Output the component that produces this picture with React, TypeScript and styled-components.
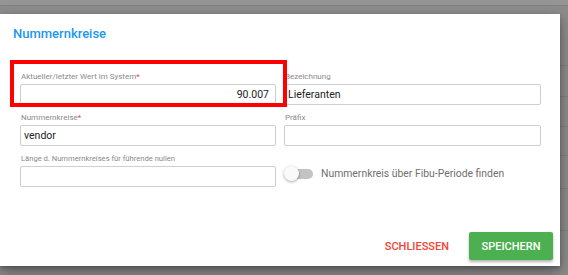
import React, { useState } from 'react';
import styled, { createGlobalStyle } from 'styled-components';

const GlobalStyle = createGlobalStyle`
  html, body {
    margin: 0;
    padding: 0;
    width: 568px;
    height: 275px;
    overflow: hidden;
    font-family: 'Roboto', 'Liberation Sans', sans-serif;
  }
`;

const Page = styled.div`
  position: relative;
  width: 568px;
  height: 275px;
  background-color: #8c8c8c;
  overflow: hidden;
`;

const BackdropRow = styled.div<{ $height: number }>`
  height: ${(p) => p.$height}px;
  border-bottom: 1px solid #808080;
  box-sizing: border-box;
`;

const Dialog = styled.div`
  position: absolute;
  top: 14px;
  left: 0;
  width: 560px;
  height: 252px;
  background-color: white;
  box-shadow: 0 6px 14px rgba(0, 0, 0, 0.35), 0 2px 4px rgba(0, 0, 0, 0.2);
  display: flex;
  flex-direction: column;
`;

const Title = styled.h2`
  margin: 0;
  padding: 12px 13px 0;
  height: 45px;
  box-sizing: border-box;
  font-size: 13px;
  font-weight: 500;
  color: #2196f3;
`;

const Form = styled.div`
  display: grid;
  grid-template-columns: 256px 257px;
  column-gap: 8px;
  row-gap: 7px;
  padding: 12px 19px 0 20px;
`;

const Field = styled.div`
  display: flex;
  flex-direction: column;
`;

const Label = styled.label<{ $size?: number }>`
  height: 12px;
  margin-bottom: 1px;
  padding-left: 1px;
  font-size: ${(p) => p.$size ?? 8}px;
  line-height: 12px;
  color: #8a8a8a;
  white-space: nowrap;
`;

const Required = styled.span`
  color: #f44336;
`;

const Input = styled.div<{ $align?: 'left' | 'right' }>`
  height: 21px;
  box-sizing: border-box;
  border: 1px solid #cfcfcf;
  border-radius: 2px;
  padding: 0 ${(p) => (p.$align === 'right' ? '6px' : '3px')};
  font-size: 10.5px;
  line-height: 19px;
  color: #222;
  text-align: ${(p) => p.$align ?? 'left'};
`;

const ToggleRow = styled.div`
  display: flex;
  align-items: center;
  gap: 8px;
  padding-top: 7px;
  cursor: pointer;
`;

const Track = styled.div<{ $on: boolean }>`
  position: relative;
  width: 28px;
  height: 10px;
  margin-left: 1px;
  border-radius: 5px;
  background-color: ${(p) => (p.$on ? '#90caf9' : '#c4c4c4')};
`;

const Thumb = styled.div<{ $on: boolean }>`
  position: absolute;
  top: -3px;
  left: ${(p) => (p.$on ? '14px' : '-1px')};
  width: 15px;
  height: 15px;
  border-radius: 50%;
  background-color: ${(p) => (p.$on ? '#2196f3' : '#fafafa')};
  box-shadow: 0 1px 3px rgba(0, 0, 0, 0.35);
`;

const ToggleText = styled.span`
  font-size: 10.4px;
  color: #6f6f6f;
`;

const Footer = styled.div`
  margin-top: auto;
  display: flex;
  justify-content: flex-end;
  align-items: center;
  gap: 10px;
  padding: 0 7px 6px 0;
`;

const TextButton = styled.button`
  border: none;
  background: none;
  padding: 0 10px;
  height: 28px;
  font-family: inherit;
  font-size: 11px;
  font-weight: 500;
  color: #f44336;
  cursor: pointer;
`;

const PrimaryButton = styled.button`
  width: 84px;
  height: 28px;
  border: none;
  border-radius: 2px;
  background-color: #4caf50;
  color: white;
  font-family: inherit;
  font-size: 11px;
  font-weight: 500;
  box-shadow: 0 2px 3px rgba(0, 0, 0, 0.3);
  cursor: pointer;
`;

const Highlight = styled.div`
  position: absolute;
  top: 46px;
  left: 10px;
  width: 277px;
  height: 47px;
  box-sizing: border-box;
  border: 4px solid #ff0000;
  pointer-events: none;
`;

const App = () => {
  const [periodOn, setPeriodOn] = useState(false);

  return (
    <>
      <GlobalStyle />
      <Page>
        <BackdropRow $height={6} style={{ backgroundColor: '#959595' }} />
        <BackdropRow $height={60} />
        <BackdropRow $height={31} />
        <BackdropRow $height={30} />
        <BackdropRow $height={29} />
        <BackdropRow $height={33} />
        <BackdropRow $height={42} />
        <Dialog>
          <Title>Nummernkreise</Title>
          <Form>
            <Field>
              <Label>
                Aktueller/letzter Wert im System<Required>*</Required>
              </Label>
              <Input $align='right'>90.007</Input>
            </Field>
            <Field>
              <Label>Bezeichnung</Label>
              <Input>Lieferanten</Input>
            </Field>
            <Field>
              <Label>
                Nummernkreise<Required>*</Required>
              </Label>
              <Input>vendor</Input>
            </Field>
            <Field>
              <Label>Präfix</Label>
              <Input />
            </Field>
            <Field>
              <Label $size={7.6}>Länge d. Nummernkreises für führende nullen</Label>
              <Input />
            </Field>
            <ToggleRow onClick={() => setPeriodOn(!periodOn)}>
              <Track $on={periodOn}>
                <Thumb $on={periodOn} />
              </Track>
              <ToggleText>Nummernkreis über Fibu-Periode finden</ToggleText>
            </ToggleRow>
          </Form>
          <Footer>
            <TextButton>SCHLIESSEN</TextButton>
            <PrimaryButton>SPEICHERN</PrimaryButton>
          </Footer>
          <Highlight />
        </Dialog>
      </Page>
    </>
  );
};

export default App;
